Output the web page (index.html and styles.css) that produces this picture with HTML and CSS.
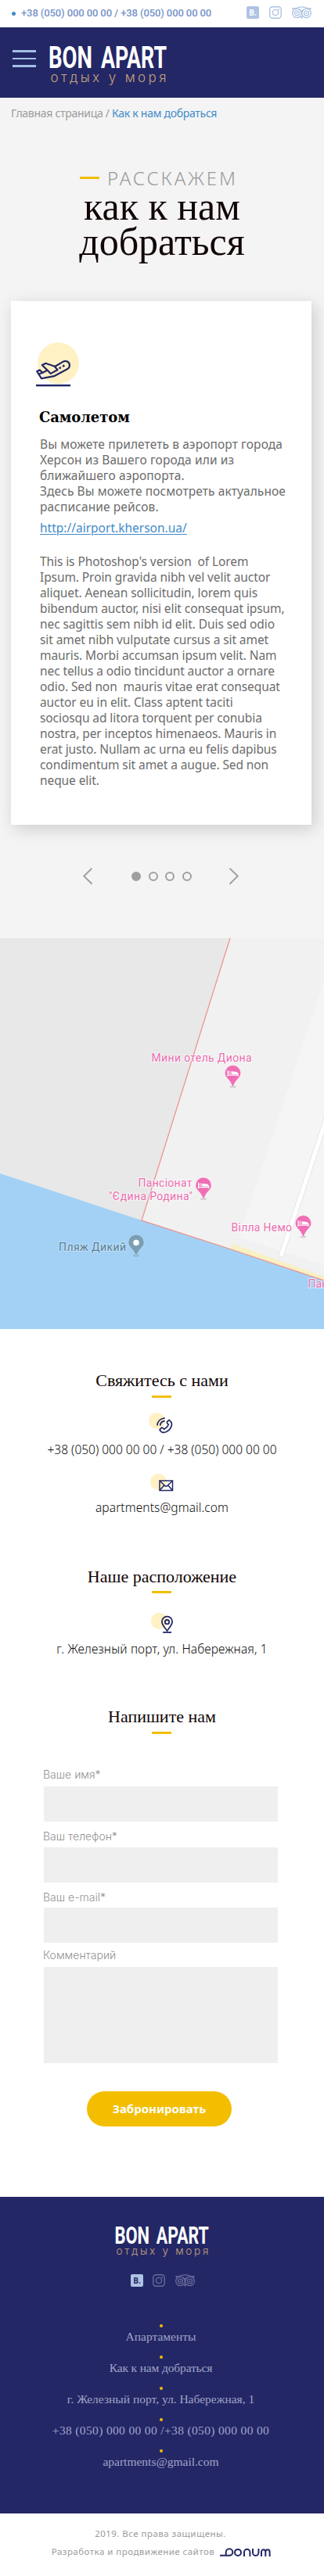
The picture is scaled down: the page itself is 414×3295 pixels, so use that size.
FILE: index.html
```html
<!DOCTYPE html>
<html lang="ru">
<head>
<meta charset="utf-8">
<title>Bon Apart — Как к нам добраться</title>
<link rel="stylesheet" href="styles.css">
</head>
<body>
<svg class="defs" width="0" height="0">
  <defs>
    <symbol id="instagram" viewBox="0 0 16 16">
      <rect x=".75" y=".75" width="14.5" height="14.5" rx="3.5" fill="none" stroke="currentColor" stroke-width="1.4"/>
      <circle cx="8" cy="8" r="3.6" fill="none" stroke="currentColor" stroke-width="1.4"/>
      <circle cx="12.1" cy="3.9" r="1" fill="currentColor"/>
    </symbol>
    <symbol id="tripadvisor" viewBox="0 0 25 16">
      <g fill="none" stroke="currentColor" stroke-width="1.3">
        <circle cx="6.4" cy="9" r="5.7"/><circle cx="18.6" cy="9" r="5.7"/>
        <circle cx="6.4" cy="9" r="2.9"/><circle cx="18.6" cy="9" r="2.9"/>
        <path d="M.3 2.7H5C9 .2 16 .2 20 2.7h4.7M1.2 2.9l1 2.1M23.8 2.9l-1 2.1M11.2 12.4l1.3 2.6 1.3-2.6M12.5 8.5Q12.6 5 16 3.6M12.5 8.5Q12.4 5 9 3.6"/>
      </g>
      <circle cx="6.4" cy="9" r="1.1" fill="currentColor"/><circle cx="18.6" cy="9" r="1.1" fill="currentColor"/>
    </symbol>
    <symbol id="logo" viewBox="0 0 150 54">
      <text x="-1" y="29.700" class="logo-name" textLength="56" lengthAdjust="spacingAndGlyphs">BON</text>
      <text x="66" y="29.700" class="logo-name" textLength="84" lengthAdjust="spacingAndGlyphs">APART</text>
      <text x="1.500" y="48" class="logo-tag" textLength="148" lengthAdjust="spacing">отдых у моря</text>
    </symbol>
    <symbol id="hotel" viewBox="0 0 24 32" overflow="visible">
      <ellipse cx="12" cy="29" rx="4" ry="1.6" fill="#000" opacity=".14"/>
      <path d="M12 1.500a10.200 10.200 0 0 1 10.200 10.200c0 6-6.600 7.800-9.400 16.600q-.8 1.400-1.600 0C8.400 19.500 1.800 17.700 1.800 11.700A10.200 10.200 0 0 1 12 1.500z" fill="#f06eb4" stroke="#fff" stroke-opacity=".7" stroke-width=".8"/>
      <path d="M5.600 8v7.800M5.600 14.200h13M18.600 15.800V11.400" stroke="#fff" stroke-width="1.200" fill="none"/>
      <circle cx="8.200" cy="10.800" r="1.300" fill="none" stroke="#fff" stroke-width=".9"/>
      <path d="M10.300 9.300l6 .8q2 .3 2 2v.9h-8z" fill="#fff"/>
    </symbol>
  </defs>
</svg>

<div class="topbar">
  <span class="topbar-dot"></span>
  <span class="topbar-phone">+38 (050) 000 00 00 / +38 (050) 000 00 00</span>
  <span class="booking">B.</span>
  <svg class="insta" width="16" height="16"><use href="#instagram"/></svg>
  <svg class="trip" width="25" height="16"><use href="#tripadvisor"/></svg>
</div>

<header class="header">
  <div class="burger"><i></i><i></i><i></i></div>
  <svg class="logo" width="150" height="54"><use href="#logo"/></svg>
</header>

<main class="directions">
  <nav class="crumbs"><span>Главная страница</span> / <a>Как к нам добраться</a></nav>
  <div class="kicker"><i></i><span>РАССКАЖЕМ</span></div>
  <h1>как к нам<br>добраться</h1>
  <article class="card">
    <svg class="plane" width="58" height="58" viewBox="0 0 58 58">
      <circle cx="28.500" cy="26.500" r="26.500" fill="#fff1c4"/>
      <g fill="none" stroke="#232766" stroke-width="2.200" stroke-linejoin="round">
        <path d="M7 46.200L1.200 37l3.600-1.800 3.600 3.600 6.200-3.200-6.800-6.600 4.600-2.300 12 4 9.800-5.800c4.500-2.600 8.500.2 8.700 3.900.2 2.600-1 4.300-3.200 5.500L23 43.200z"/>
        <path d="M14.600 35.600l4.200 4.300 8.800-4.900-4.100-4.500M3.300 40.500l5.200-1.800"/>
        <path d="M29.500 33.200l2.400-1.300M34 30.700l2.400-1.300" stroke-width="2.400"/>
      </g>
      <path d="M0 55h44" stroke="#232766" stroke-width="2.400"/>
    </svg>
    <h2>Самолетом</h2>
    <p class="text p1">Вы можете прилететь в аэропорт города<br>Херсон из Вашего города или из<br>ближайшего аэропорта.<br>Здесь Вы можете посмотреть актуальное<br>расписание рейсов.</p>
    <a class="text link">http://airport.kherson.ua/</a>
    <p class="text p2">This is Photoshop's version&nbsp; of Lorem<br>Ipsum. Proin gravida nibh vel velit auctor<br>aliquet. Aenean sollicitudin, lorem quis<br>bibendum auctor, nisi elit consequat ipsum,<br>nec sagittis sem nibh id elit. Duis sed odio<br>sit amet nibh vulputate cursus a sit amet<br>mauris. Morbi accumsan ipsum velit. Nam<br>nec tellus a odio tincidunt auctor a ornare<br>odio. Sed non&nbsp; mauris vitae erat consequat<br>auctor eu in elit. Class aptent taciti<br>sociosqu ad litora torquent per conubia<br>nostra, per inceptos himenaeos. Mauris in<br>erat justo. Nullam ac urna eu felis dapibus<br>condimentum sit amet a augue. Sed non<br>neque elit.</p>
  </article>
  <div class="pager">
    <svg width="12" height="22" viewBox="0 0 12 22"><path d="M11.500.7L1.200 10.700l10.300 10"/></svg>
    <div class="dots"><i class="on"></i><i></i><i></i><i></i></div>
    <svg width="12" height="22" viewBox="0 0 12 22"><path d="M.5.700l10.300 10-10.300 10"/></svg>
  </div>
</main>

<svg class="map" width="414" height="500" viewBox="0 0 414 500">
  <rect width="414" height="500" fill="#a3d1f6"/>
  <path d="M0 0H294L181 361 0 301z" fill="#e8e8e8"/>
  <path d="M294 0H414V438L295 398 181 361z" fill="#f1f1f1"/>
  <path d="M414 55V418L305 383z" fill="#f5f5f5"/>
  <path d="M297 391L414 433V438L295 398z" fill="#f9f0c3"/>
  <path d="M359.500 405L418 228" stroke="#e2e2e2" stroke-width="7" stroke-linecap="round"/>
  <path d="M359.500 405L418 228" stroke="#fff" stroke-width="5.400" stroke-linecap="round"/>
  <path d="M294 0L181 361 295 398 414 438" fill="none" stroke="#ef8f88" stroke-width="1.200"/>
  <g class="map-label">
    <text x="193.500" y="157.500" textLength="128">Мини отель Диона</text>
    <text x="176.500" y="318" textLength="69">Пансіонат</text>
    <text x="139" y="334.500" textLength="107">"Єдина Родина"</text>
    <text x="295.500" y="374.500" textLength="77.500">Вілла Немо</text>
    <text x="393.500" y="447">Пан</text>
    <text class="map-beach" x="75" y="399.500" textLength="86">Пляж Дикий</text>
  </g>
  <use href="#hotel" x="285.500" y="161" width="24" height="32"/>
  <use href="#hotel" x="248" y="304.500" width="24" height="32"/>
  <use href="#hotel" x="375.500" y="353" width="24" height="32"/>
  <ellipse cx="174" cy="406" rx="4" ry="1.600" opacity=".14"/>
  <path d="M174 379a10.200 10.200 0 0 1 10.200 10.200c0 6-6.600 7.800-9.400 16.600q-.8 1.400-1.600 0c-2.800-8.800-9.400-10.600-9.400-16.600A10.200 10.200 0 0 1 174 379z" fill="#7a9fb4" stroke="#bcdcf4" stroke-width=".8"/>
  <circle cx="174" cy="389.500" r="3.800" fill="#fff"/>
</svg>

<section class="contacts">
  <h3 class="h-contact">Свяжитесь с нами</h3>
  <i class="bar"></i>
  <svg class="ic-phone" width="34" height="27" viewBox="0 0 34 27">
    <circle cx="13.500" cy="10.500" r="10.500" fill="#fff1c4"/>
    <g fill="none" stroke="#232766" stroke-width="1.700">
      <path d="M13.900 16.500C14 11.300 18 7 23.700 6.800M17.700 16.500c.2-3.200 2.600-5.600 6-5.800"/>
      <path d="M28.800 9.300q3.800 2.300 3.700 6.200c-.9 5-5.200 9.200-10.200 9.900q-3.300.1-5.300-3.600l2.500-2.700q2-.2 3.200 2.100 4.200-2.400 5.600-5.900-2.200-1.600-1.900-3.500z" stroke-linejoin="round"/>
    </g>
  </svg>
  <p class="line l-phone">+38 (050) 000 00 00 / +38 (050) 000 00 00</p>
  <svg class="ic-mail" width="30" height="23" viewBox="0 0 30 23">
    <circle cx="10.500" cy="10.500" r="10.500" fill="#fff1c4"/>
    <g fill="none" stroke="#232766" stroke-width="1.500"><rect x="12" y="9" width="16.500" height="12.500"/><path d="M12 9l7.200 7h2l7.300-7M12 21.500l5.800-6.800M28.500 21.500l-5.800-6.800"/></g>
  </svg>
  <p class="line l-mail">apartments@gmail.com</p>

  <h3 class="h-place">Наше расположение</h3>
  <i class="bar"></i>
  <svg class="ic-pin" width="28" height="27" viewBox="0 0 28 27">
    <circle cx="10.500" cy="10.500" r="10.500" fill="#fff1c4"/>
    <g fill="none" stroke="#232766" stroke-width="1.800"><path d="M20.500 23c-2.200-3.300-6.600-7.200-6.600-11.700a6.600 6.600 0 0 1 13.200 0c0 4.500-4.400 8.400-6.600 11.700z"/><circle cx="20.500" cy="11.700" r="2.700"/><path d="M15.200 25h10.800"/></g>
  </svg>
  <p class="line l-place">г. Железный порт, ул. Набережная, 1</p>

  <h3 class="h-write">Напишите нам</h3>
  <i class="bar"></i>
  <form class="form">
    <label>Ваше имя*</label><input type="text">
    <label class="lb2">Ваш телефон*</label><input type="text">
    <label class="lb3">Ваш e-mail*</label><input type="text">
    <label class="lb4">Комментарий</label><textarea></textarea>
    <button type="button">Забронировать</button>
  </form>
</section>

<footer class="footer">
  <svg class="footer-logo" width="120" height="43"><use href="#logo"/></svg>
  <div class="social">
    <span class="booking">B.</span>
    <svg class="insta" width="16" height="16"><use href="#instagram"/></svg>
    <svg class="trip" width="25" height="16"><use href="#tripadvisor"/></svg>
  </div>
  <ul>
    <li>Апартаменты</li>
    <li class="f2">Как к нам добраться</li>
    <li>г. Железный порт, ул. Набережная, 1</li>
    <li class="f4">+38 (050) 000 00 00 /+38 (050) 000 00 00</li>
    <li>apartments@gmail.com</li>
  </ul>
</footer>
<div class="copy">
  <p class="c1">2019. Все права защищены.</p>
  <p class="c2">Разработка и продвижение сайтов
    <svg width="65" height="12" viewBox="0 0 65 12" fill="none" stroke="#232766" stroke-width="2">
      <path d="M0 9.800H12a4.300 4.300 0 1 0-4.300-4.300V9.800M31 11V5.500a3.700 3.700 0 0 1 7.400 0V11M42 1v5.300a3.700 3.700 0 0 0 7.400 0V1M53 11V5a2.600 2.600 0 0 1 5.300 0V11M58.300 5a2.600 2.600 0 0 1 5.300 0V11"/>
      <circle cx="23" cy="5.900" r="4"/>
    </svg>
  </p>
</div>
</body>
</html>
```
FILE: styles.css
```css
* { box-sizing: border-box; }
body { margin: 0; width: 414px; background: #fff; font-family: "Noto Sans", sans-serif; overflow-x: hidden; }
h1, h2, h3, p, ul { margin: 0; padding: 0; font-weight: 400; }
i, svg { display: block; }
.defs { position: absolute; }

.topbar { display: flex; height: 35px; padding: 8px 0 0 15px; color: #afc3e3; white-space: nowrap; }
.topbar-dot { width: 5px; height: 5px; margin: 7px 7px 0 0; border-radius: 50%; background: #428bca; }
.topbar-phone { width: 288px; color: #7793c8; font: 500 13px/18px Roboto, sans-serif; letter-spacing: -.1px; }
.booking { width: 16px; height: 16px; border-radius: 2px; background: #afc3e3; color: #fff; font: 700 10px/16px "Open Sans", sans-serif; text-align: center; }
.insta { margin-left: 13px; }
.trip { margin-left: 13px; }

.header { display: flex; height: 90px; padding: 22px 0 0 16px; background: #232766; }
.burger { display: flex; flex-direction: column; gap: 7px; width: 30px; padding-top: 7px; }
.burger i { height: 2.500px; background: #a3bfe4; }
.logo { margin-left: 17px; }
.logo-name { font: 700 38.400px Roboto, sans-serif; fill: #fff; }
.logo-tag { font: 300 17px Inter, sans-serif; fill: #c8a27a; }

.directions { height: 1075px; padding: 10px 14px 0; background: #f4f4f4; }
.crumbs { height: 20px; color: #9b9b9b; font-size: 14px; line-height: 20px; white-space: nowrap; letter-spacing: -.29px; }
.crumbs a { color: #428bca; }
.kicker { display: flex; margin: 59px 0 0 88px; height: 28px; }
.kicker i { width: 25px; height: 3px; margin: 12px 10px 0 0; background: #f3be00; }
.kicker span { color: #9a9a9a; font-size: 24px; font-weight: 300; line-height: 28px; letter-spacing: 2.900px; }
h1 { color: #120606; font: 400 50px/45px "Liberation Serif", serif; text-align: center; white-space: nowrap; }
.card { width: 384px; height: 670px; margin-top: 53px; padding: 53px 0 0 37px; background: #fff; box-shadow: 4px 5px 20px rgba(0, 0, 0, .17); white-space: nowrap; }
.plane { margin-left: -5px; }
h2 { margin: 26px 0 12px -1px; font: 700 18px/24px "DejaVu Serif", serif; letter-spacing: -.1px; }
.text { display: block; color: #6c6c6c; font-size: 15.500px; line-height: 20px; }
.p1 { letter-spacing: .1px; }
.p2 { letter-spacing: -.09px; }
.link { margin: 7px 0 23px; color: #428bca; text-decoration: underline; text-underline-offset: 2px; }
.pager { display: flex; align-items: center; height: 22px; margin: 55px 0 0 92px; }
.pager path { fill: none; stroke: #9f9f9f; stroke-width: 1.900; }
.dots { display: flex; gap: 9.670px; margin: 0 48px 0 50px; }
.dots i { width: 12px; height: 12px; border: 2px solid #9f9f9f; border-radius: 50%; }
.dots .on { background: #9f9f9f; }

.map { display: block; }
.map-label { font: 400 14px Roboto, sans-serif; fill: #ec6db0; stroke: #fff; stroke-opacity: .7; stroke-width: 2px; paint-order: stroke; stroke-linejoin: round; }
.map-beach { fill: #5b7f94; stroke: #cfe5f8; }

.contacts { height: 1110px; padding-top: 54px; color: #0c0c0c; text-align: center; white-space: nowrap; }
h3 { height: 24px; color: #120606; font: 400 22px/24px "Liberation Serif", serif; }
.bar { width: 25px; height: 3px; margin: 7px 0 0 194px; background: #f3be00; }
.line { font-size: 15.500px; font-weight: 300; line-height: 20px; }
.l-mail { letter-spacing: .1px; }
.l-place { letter-spacing: .14px; }
.ic-phone { margin: 19px 0 10px 190px; }
.ic-phone { margin-left: 187px; }
.ic-mail { margin: 21px 0 10px 192px; }
.h-place { margin-top: 67px; }
.h-place + .bar { margin-top: 6px; }
.ic-pin { margin: 25px 0 9px 193px; }
.h-write { margin-top: 65px; }
.form { display: flex; flex-direction: column; width: 299px; margin: 42px 0 0 56px; text-align: left; }
.form label { height: 20px; margin: 0 0 5px -1px; color: #929292; font: 300 14px/20px Inter, sans-serif; }
.form input { height: 45px; border: 0; padding: 0; background: #efefef; }
.form .lb2 { margin-top: 9px; margin-bottom: 4px; }
.form .lb3 { margin-top: 9px; margin-bottom: 3px; }
.form .lb4 { margin-top: 6px; }
.form textarea { height: 123px; border: 0; background: #efefef; resize: none; }
.form button { width: 185px; height: 45px; margin: 36px 0 0 55px; border: 0; border-radius: 22.500px; background: #f3be00; color: #fff; font: 700 15px/43px "Noto Sans", sans-serif; padding: 0; }

.footer { height: 405px; padding-top: 36px; background: #232766; }
.footer-logo { margin-left: 147px; }
.social { display: flex; margin: 20px 0 0 167px; color: #666a9a; }
.social .booking { color: #232766; }
.social .insta { margin-left: 12px; }
.footer ul { margin-top: 48px; list-style: none; text-align: center; white-space: nowrap; }
.footer li { height: 40px; color: #a0a3c6; padding-right: 3px; font: 400 15.500px/20px "Liberation Serif", serif; }
.footer li::before { content: ""; display: block; width: 4px; height: 4px; margin: 0 0 2px 204px; border-radius: 50%; background: #f3be00; }
.footer .f2 { letter-spacing: -.15px; }
.footer .f4 { letter-spacing: .350px; }

.copy { height: 80px; padding-top: 15px; color: #9b9b9b; font-size: 11.500px; line-height: 22px; text-align: center; letter-spacing: .470px; white-space: nowrap; }
.c1 { padding-right: 4px; }
.c2 { display: flex; justify-content: center; gap: 7px; margin-top: 1px; padding-right: 2px; }
.c2 svg { margin-top: 6px; }
```
